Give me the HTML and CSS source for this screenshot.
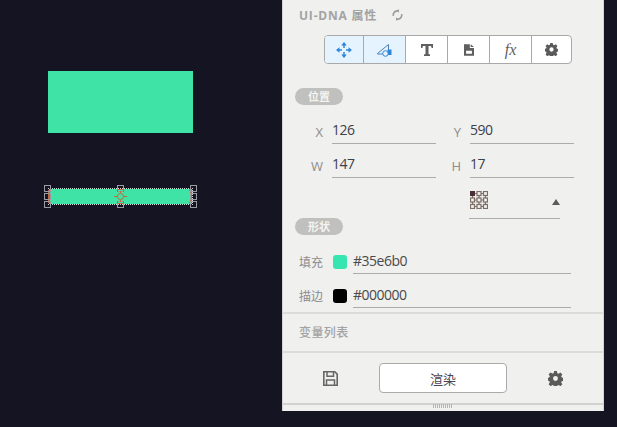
FILE: index.html
```html
<!DOCTYPE html>
<html lang="zh">
<head>
<meta charset="utf-8">
<title>UI-DNA</title>
<link rel="stylesheet" href="styles.css">
</head>
<body>
<div class="shape shape-a"></div>
<div class="shape shape-b">
  <span class="edge edge-l"></span><span class="edge edge-r"></span>
  <span class="handle h-tl"></span><span class="handle h-ml"></span><span class="handle h-bl"></span>
  <span class="handle h-tc"></span><span class="handle h-bc"></span>
  <span class="handle h-tr"></span><span class="handle h-mr"></span><span class="handle h-br"></span>
  <svg class="anchor" width="13" height="15" viewBox="0 0 13 15" fill="none" stroke="#c4683c"><circle cx="6.500" cy="7.500" r="3"/><path d="M6.500 2v2M6.500 11v2M0 7.500h3M10 7.500h3M3.500 3V.5h6V3M3.500 12v2.500h6V12"/></svg>
</div>
<aside class="panel">
  <header class="title"><span>UI-DNA 属性</span>
    <svg class="refresh" width="13" height="12" viewBox="0 0 13 13" fill="none" stroke="#9c9c9c" stroke-width="1.800"><path d="M2 7.500A4.500 4.500 0 0 1 6 2h2M11 5.500A4.500 4.500 0 0 1 7 11H5"/><path d="M8 0v4l-2-2zM5 9v4l2-2z" fill="#9c9c9c" stroke="none"/></svg>
  </header>
  <nav class="tabs">
    <button class="tab on"><svg width="16" height="16" viewBox="0 0 16 16" fill="none" stroke="#2f86d8" stroke-width="1.500"><path d="M8 3v3M8 10v3M3 8h3M10 8h3"/><path d="M8 0l2.800 3.500H5.200zM8 16l-2.800-3.500h5.600zM0 8l3.500-2.800v5.600zM16 8l-3.500 2.800V5.200z" fill="#2f86d8" stroke="none"/></svg></button>
    <button class="tab on"><svg width="15" height="14" viewBox="0 0 15 14" fill="none" stroke="#4a7fb5"><path d="M.5 10.500L11.500 1.500V11H.5z"/><circle cx="8.500" cy="10.500" r="2.800" fill="#e5f3fe" stroke="#2f86d8"/><path d="M10.500 6.500H14.500V12H11z" fill="#2f86d8" stroke="none"/></svg></button>
    <button class="tab"><svg width="14" height="14" viewBox="0 0 14 14" fill="#5f5f5f"><path d="M1 1h12v4h-1.300l-.7-2H8.500v8l1.500.6V13H4v-1.400l1.500-.6V3H3l-.7 2H1z"/></svg></button>
    <button class="tab"><svg width="10" height="12" viewBox="0 0 12 14" fill="#5f5f5f"><path fill-rule="evenodd" d="M0 0h7v4.500h5V14H0zM8 0l4 3.500H8zM2.500 8v3.500h7V8z"/></svg></button>
    <button class="tab fx">fx</button>
    <button class="tab"><svg class="gear" width="13" height="13" viewBox="0 0 14 14"><use href="#gear"/></svg></button>
  </nav>
  <h2 class="pill">位置</h2>
  <div class="grid">
    <label class="field"><span class="key">X</span><span class="value">126</span></label>
    <label class="field"><span class="key">Y</span><span class="value">590</span></label>
    <label class="field"><span class="key">W</span><span class="value">147</span></label>
    <label class="field"><span class="key">H</span><span class="value">17</span></label>
  </div>
  <div class="origin">
    <svg width="18" height="18" viewBox="0 0 18 18" fill="none" stroke="#7a6e66" stroke-width="1.200"><rect x="0" y="0" width="5" height="5" fill="#4a2f3a" stroke="none"/><path d="M5 2.500h2M11 2.500h2M5 9h2M11 9h2M5 15.500h2M11 15.500h2M2.500 5v2M9 5v2M15.500 5v2M2.500 11v2M9 11v2M15.500 11v2"/><rect x="7" y=".5" width="4" height="4"/><rect x="13.500" y=".5" width="4" height="4"/><rect x=".5" y="7" width="4" height="4"/><rect x="7" y="7" width="4" height="4"/><rect x="13.500" y="7" width="4" height="4"/><rect x=".5" y="13.500" width="4" height="4"/><rect x="7" y="13.500" width="4" height="4"/><rect x="13.500" y="13.500" width="4" height="4"/></svg>
    <span class="caret"></span>
  </div>
  <h2 class="pill pill-shape">形状</h2>
  <div class="color-row"><span class="color-label">填充</span><span class="swatch fill"></span><span class="hex">#35e6b0</span></div>
  <div class="color-row"><span class="color-label">描边</span><span class="swatch stroke"></span><span class="hex">#000000</span></div>
  <section class="vars">变量列表</section>
  <footer class="actions">
    <svg class="save" width="15" height="15" viewBox="0 0 15 15" fill="none" stroke="#666" stroke-width="1.600"><path d="M.8.800h11l2.400 2.400v11H.8z"/><path d="M4 1v4.200h6.500V1M3.500 14V9h8v5" stroke-width="1.500"/></svg>
    <button class="render">渲染</button>
    <svg class="gear-lg" width="15" height="15" viewBox="0 0 14 14"><use href="#gear"/></svg>
  </footer>
  <div class="grip"></div>
</aside>
<svg class="defs" width="0" height="0"><defs><path id="gear" fill="#5a5a5a" fill-rule="evenodd" d="M5.700 0h2.600l.4 2 1.200.5 1.700-1.100 1.800 1.800-1.100 1.700.5 1.200 2 .4v2.600l-2 .4-.5 1.200 1.100 1.700-1.800 1.800-1.700-1.100-1.200.5-.4 2H5.700l-.4-2-1.200-.5-1.700 1.100L.6 12.300l1.100-1.700-.5-1.200-2-.4V6.400l2-.4.500-1.200L.6 3.100l1.800-1.800 1.700 1.100L5.300 2zM7 4.700a2.300 2.300 0 1 0 0 4.600 2.300 2.300 0 0 0 0-4.600z"/></defs></svg>
</body>
</html>
```

FILE: styles.css
```css
* { box-sizing: border-box; }
html, body { margin: 0; height: 100%; }
body {
  position: relative;
  overflow: hidden;
  background: #151423;
  font-family: "Open Sans", "Noto Sans CJK SC", sans-serif;
}
.defs { position: absolute; }
.shape { position: absolute; background: #3fe3a5; }
.shape-a { left: 48px; top: 71px; width: 145px; height: 62px; }
.shape-b {
  left: 49px; top: 189px; width: 143px; height: 15px;
  outline: 1px dotted #d8d8d8;
}
.edge {
  position: absolute;
  top: 1px;
  width: 3px; height: 13px;
  border: 2px solid #c4683c;
  border-width: 1px 0;
}
.edge-l { left: -1px; border-left: 2px solid #c4683c; }
.edge-r { right: 0; border-right: 2px solid #c4683c; }
.handle {
  position: absolute;
  width: 7px; height: 7px;
  border: 1px solid #9a9aa2;
  background: transparent;
}
.h-tl { left: -5px; top: -4px; }
.h-ml { left: -5px; top: 4px; }
.h-bl { left: -5px; top: 12px; }
.h-tc { left: 68px; top: -4px; }
.h-bc { left: 68px; top: 12px; }
.h-tr { left: 141px; top: -4px; }
.h-mr { left: 141px; top: 4px; }
.h-br { left: 141px; top: 12px; }
.anchor { position: absolute; left: 65px; top: 0; }

.panel {
  position: absolute;
  left: 282px; top: 0;
  width: 322px; height: 411px;
  background: #f0f0ee;
  border-left: 1px solid #d4d4d2;
  border-right: 1px solid #d4d4d2;
  display: flex;
  flex-direction: column;
}
.title {
  height: 35px;
  padding: 4px 0 10px 16px;
  display: flex;
  align-items: center;
  gap: 14px;
  font-size: 12px;
  font-weight: 700;
  letter-spacing: .8px;
  color: #a3a3a3;
}
.tabs {
  display: flex;
  align-self: flex-start;
  margin-left: 41px;
  height: 29px;
  border: 1px solid #a9a9a9;
  border-radius: 4px;
  background: #fff;
  overflow: hidden;
}
.tab {
  width: 42px;
  padding: 0;
  border: 0;
  border-left: 1px solid #a9a9a9;
  background: transparent;
  display: flex;
  align-items: center;
  justify-content: center;
}
.tab:first-child { width: 38px; border-left: 0; }
.tab:last-child { width: 40px; }
.tab.on { background: #e5f3fe; }
.tab.fx {
  font-family: "Liberation Serif", serif;
  font-style: italic;
  font-size: 16px;
  color: #5f5f5f;
}
.pill {
  margin: 24px 0 0 12px;
  width: 48px; height: 17px;
  border-radius: 9px;
  background: #c0c0be;
  color: #f4f4f2;
  font-size: 11px;
  font-weight: 700;
  line-height: 17px;
  text-align: center;
}
.pill-shape { margin-top: -1px; }
.grid {
  display: grid;
  grid-template-columns: 104px 104px;
  column-gap: 34px;
  row-gap: 10px;
  margin: 15px 0 0 49px;
}
.field {
  position: relative;
  height: 24px;
  border-bottom: 1px solid #acacac;
  display: block;
}
.key {
  position: absolute;
  right: 113px; top: 3px;
  font-size: 13px;
  color: #8c8c8c;
}
.value {
  font-size: 14px;
  letter-spacing: -.5px;
  line-height: 20px;
  color: #3c4148;
  display: block;
}
.origin {
  margin: 13px 0 0 186px;
  width: 91px; height: 28px;
  border-bottom: 1px solid #acacac;
  display: flex;
  justify-content: space-between;
  padding: 0 0 0 1px;
}
.caret {
  margin: 8px 0 0 0;
  width: 0; height: 0;
  border: 4px solid transparent;
  border-top: 0;
  border-bottom: 6px solid #5c5c5c;
}
.color-row {
  position: relative;
  display: flex;
  align-items: center;
  height: 24px;
  margin-top: 10px;
  padding-left: 16px;
}
.pill-shape + .color-row { margin-top: 15px; }
.color-label {
  width: 34px;
  font-size: 12px;
  color: #8c8c8c;
}
.swatch {
  width: 14px; height: 14px;
  border-radius: 3px;
  margin-right: 6px;
}
.swatch.fill { background: #35e6b0; }
.swatch.stroke { background: #000; }
.hex {
  width: 218px;
  height: 24px;
  line-height: 21px;
  font-size: 14px;
  letter-spacing: -.5px;
  color: #4a4a4a;
  border-bottom: 1px solid #acacac;
}
.vars {
  margin-top: 4px;
  height: 41px;
  padding-left: 16px;
  border-top: 2px solid #dbdbd9;
  border-bottom: 2px solid #dbdbd9;
  font-size: 12px;
  line-height: 37px;
  letter-spacing: .4px;
  color: #a3a3a3;
  font-weight: 500;
}
.actions {
  height: 50px;
  display: flex;
  align-items: center;
  padding-left: 40px;
}
.render {
  width: 128px; height: 30px;
  margin-left: 41px;
  border: 1px solid #aaa;
  border-radius: 4px;
  background: #fff;
  font-family: inherit;
  font-size: 13px;
  color: #4a4450;
}
.gear-lg { margin-left: 41px; }
.grip {
  flex: 1;
  border-top: 2px solid #d2d2d0;
  position: relative;
}
.grip::after {
  content: "";
  position: absolute;
  left: 150px; top: -1px;
  width: 20px; height: 4px;
  background: repeating-linear-gradient(90deg, #b5b5b5 0 1px, transparent 1px 2px);
}
```
